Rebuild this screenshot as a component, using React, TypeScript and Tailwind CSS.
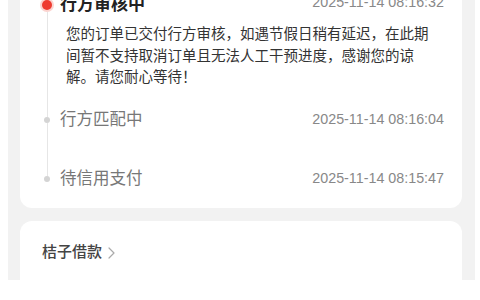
const font = { fontFamily: '"Liberation Sans", "Noto Sans CJK SC", sans-serif' };

type Step = {
  title: string;
  time: string;
  active?: boolean;
  desc?: string[];
};

const steps: Step[] = [
  {
    title: "行方审核中",
    time: "2025-11-14 08:16:32",
    active: true,
    desc: [
      "您的订单已交付行方审核，如遇节假日稍有延迟，在此期",
      "间暂不支持取消订单且无法人工干预进度，感谢您的谅",
      "解。请您耐心等待！",
    ],
  },
  { title: "行方匹配中", time: "2025-11-14 08:16:04" },
  { title: "待信用支付", time: "2025-11-14 08:15:47" },
];

function TimelineItem({ step, first, last }: { step: Step; first: boolean; last: boolean }) {
  return (
    <div className="flex">
      <div className="flex w-[14px] shrink-0 flex-col items-center">
        <div className="flex h-[22px] flex-col items-center">
          <div className={`w-px flex-1 ${first ? "bg-transparent" : "bg-[#e6e6e6]"}`} />
          {step.active ? (
            <div className="flex h-[14px] w-[14px] items-center justify-center rounded-full bg-[#fbd3cf]">
              <div className="h-[10px] w-[10px] rounded-full bg-[#ee3b30]" />
            </div>
          ) : (
            <div className="h-[6px] w-[6px] rounded-full bg-[#d4d4d4]" />
          )}
          <div className={`w-px flex-1 ${last ? "bg-transparent" : "bg-[#e6e6e6]"}`} />
        </div>
        {!last && <div className="w-px flex-1 bg-[#e6e6e6]" />}
      </div>
      <div className={`ml-[6px] flex-1 ${last ? "" : step.desc ? "pb-[20px]" : "pb-[37px]"}`}>
        <div className="flex h-[22px] items-center justify-between">
          <span
            className={
              step.active
                ? "text-[17px] font-bold text-[#222]"
                : "text-[16.5px] text-[#777]"
            }
          >
            {step.title}
          </span>
          <span className={`text-[14.3px] text-[#888] ${step.active ? "-mt-[4px]" : ""}`}>{step.time}</span>
        </div>
        {step.desc && (
          <div className="mt-[8px] pl-[6px] text-[14.5px] leading-[21.5px] text-[#333]">
            {step.desc.map((line, i) => (
              <div key={i} className="whitespace-nowrap">
                {line}
              </div>
            ))}
          </div>
        )}
      </div>
    </div>
  );
}

export default function App() {
  return (
    <div className="h-[300px] w-[480px] overflow-hidden bg-white" style={font}>
      <div className="ml-[8px] h-full w-[467px] bg-[linear-gradient(to_bottom,#ee3f34_0,#ee3f34_7px,#f2f2f2_7px)] pl-[12px] pr-[13px]">
        <div className="-mt-[20px] rounded-[12px] bg-white pb-[18px] pl-[20px] pr-[18px] pt-[14px]">
          {steps.map((s, i) => (
            <TimelineItem key={i} step={s} first={i === 0} last={i === steps.length - 1} />
          ))}
        </div>
        <div className="mt-[13px] h-[120px] rounded-[12px] bg-white pl-[22px] pt-[21px]">
          <div className="flex h-[22px] items-center gap-[6px]">
            <span className="text-[15px] font-medium text-[#444]">桔子借款</span>
            <svg width="7" height="12" viewBox="0 0 7 12" fill="none">
              <path d="M1 1l5 5-5 5" stroke="#aaa" strokeWidth="1.2" strokeLinecap="round" strokeLinejoin="round" />
            </svg>
          </div>
        </div>
      </div>
    </div>
  );
}
